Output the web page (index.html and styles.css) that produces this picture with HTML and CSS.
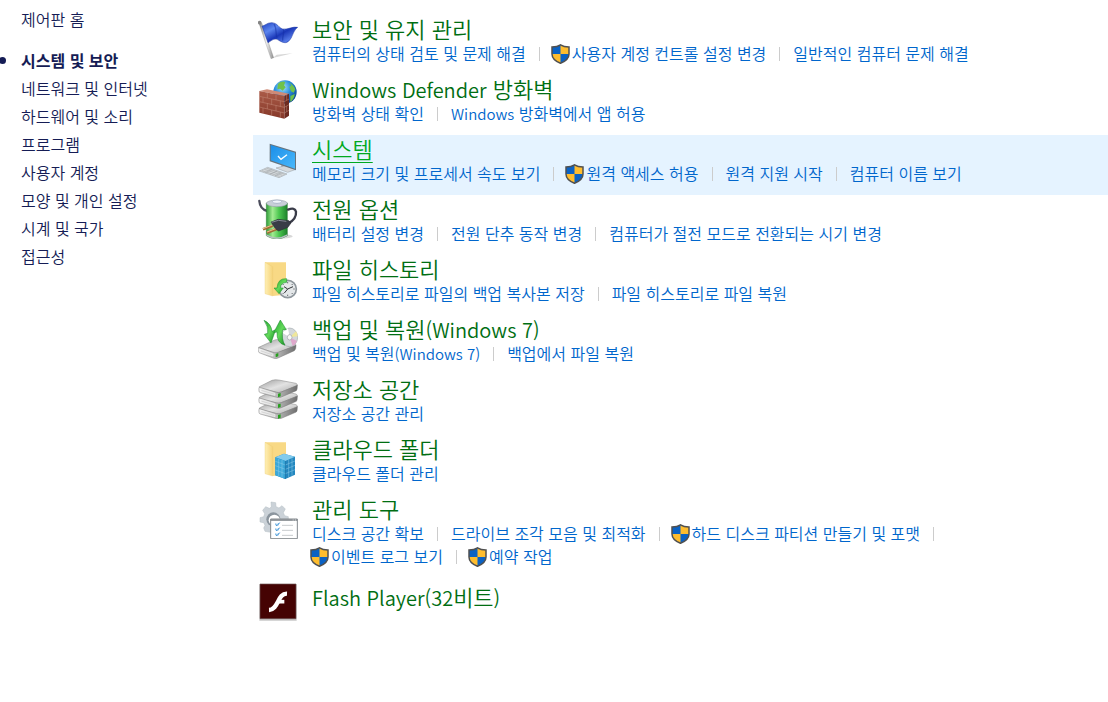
FILE: index.html
```html
<!DOCTYPE html>
<html lang="ko">
<head>
    <meta charset="UTF-8">
    <meta name="viewport" content="width=device-width, initial-scale=1.0">
    <title>시스템 및 보안</title>
    <link rel="stylesheet" href="styles.css">
</head>
<body>
    <!-- Shared shapes -->
    <svg class="defs" aria-hidden="true">
        <defs>
            <symbol id="shield" viewBox="0 0 19 20">
                <path d="M9.500 .8C7 2.500 4 3 1 3v7c0 4 4 7.500 8.500 9.300C14 17.500 18 14 18 10V3c-3 0-6-.5-8.500-2.200z" fill="#ffbd2e"/>
                <path d="M9.500.8C7 2.500 4 3 1 3v7h8.500zM9.500 10H18c0 4-4 7.500-8.500 9.300z" fill="#0b62c4"/>
                <path d="M9.500 .8C7 2.500 4 3 1 3v7c0 4 4 7.500 8.500 9.300C14 17.500 18 14 18 10V3c-3 0-6-.5-8.500-2.200z" fill="none" stroke="#505050" stroke-width="1.500"/>
            </symbol>
            <linearGradient id="flagBlue" x1="0" y1="0" x2="1" y2="1">
                <stop offset="0" stop-color="#1d3fc0"/>
                <stop offset=".3" stop-color="#5b85ee"/>
                <stop offset=".55" stop-color="#1a37b8"/>
                <stop offset=".8" stop-color="#5479e6"/>
                <stop offset="1" stop-color="#2444bd"/>
            </linearGradient>
            <linearGradient id="steel" x1="0" y1="0" x2="1" y2="0">
                <stop offset="0" stop-color="#7d7d7d"/>
                <stop offset=".5" stop-color="#f0f0f0"/>
                <stop offset="1" stop-color="#8d8d8d"/>
            </linearGradient>
            <radialGradient id="globe" cx=".4" cy=".3" r=".7">
                <stop offset="0" stop-color="#a8e4fb"/>
                <stop offset=".5" stop-color="#2a8fdc"/>
                <stop offset="1" stop-color="#0c4796"/>
            </radialGradient>
            <linearGradient id="brick" x1="0" y1="0" x2="0" y2="1">
                <stop offset="0" stop-color="#ab5b48"/>
                <stop offset="1" stop-color="#853829"/>
            </linearGradient>
            <linearGradient id="screen" x1="0" y1="0" x2="1" y2="1">
                <stop offset="0" stop-color="#1b8ee8"/>
                <stop offset="1" stop-color="#49b8fb"/>
            </linearGradient>
            <linearGradient id="cell" x1="0" y1="0" x2="1" y2="0">
                <stop offset="0" stop-color="#2f9f38"/>
                <stop offset=".3" stop-color="#a2eb92"/>
                <stop offset=".6" stop-color="#4cc750"/>
                <stop offset="1" stop-color="#1d822b"/>
            </linearGradient>
            <linearGradient id="folderFront" x1="0" y1="0" x2="1" y2="0">
                <stop offset="0" stop-color="#fff0b5"/>
                <stop offset="1" stop-color="#f5d37a"/>
            </linearGradient>
            <linearGradient id="arrowGreen" x1="0" y1="0" x2="1" y2="1">
                <stop offset="0" stop-color="#1ea32a"/>
                <stop offset=".5" stop-color="#63d95b"/>
                <stop offset="1" stop-color="#128a22"/>
            </linearGradient>
            <linearGradient id="driveTop" x1="0" y1="0" x2="1" y2="1">
                <stop offset="0" stop-color="#9b9b9b"/>
                <stop offset=".5" stop-color="#e2e2e2"/>
                <stop offset="1" stop-color="#adadad"/>
            </linearGradient>
            <linearGradient id="driveSide" x1="0" y1="0" x2="1" y2="0">
                <stop offset="0" stop-color="#f4f4f4"/>
                <stop offset=".5" stop-color="#b5b5b5"/>
                <stop offset="1" stop-color="#6e6e6e"/>
            </linearGradient>
            <g id="folder">
                <path d="M45 37h63v97l-40 4z" fill="#f8d985"/>
                <path d="M45 37l23 13v88l-23-7z" fill="url(#folderFront)" stroke="#ebc86c" stroke-width="1"/>
            </g>
            <g id="drive">
                <path d="M28 50L66 31Q74 28 86 30L138 40Q143 42 142 47L94 66Q86 69 80 67L31 55Q27 53 28 50z" fill="url(#driveTop)" stroke="#858585" stroke-width="1.500"/>
                <path d="M28 52Q26 54 27 63Q27 67 31 68L80 82Q88 84 94 81L139 62Q142 60 142 46L94 66Q86 69 80 67z" fill="url(#driveSide)" stroke="#777" stroke-width="1.500"/>
                <path d="M33 58l42 12v6l-42-12z" fill="#d4d4d4" stroke="#fff" stroke-width="1.500"/>
                <path d="M84 71l8-2v10l-8 3z" fill="#27a01f"/>
            </g>
        </defs>
    </svg>

    <div class="control-panel">
        <nav class="sidebar">
            <a class="home" href="#">제어판 홈</a>
            <ul>
                <li class="current"><a href="#">시스템 및 보안</a></li>
                <li><a href="#">네트워크 및 인터넷</a></li>
                <li><a href="#">하드웨어 및 소리</a></li>
                <li><a href="#">프로그램</a></li>
                <li><a href="#">사용자 계정</a></li>
                <li><a href="#">모양 및 개인 설정</a></li>
                <li><a href="#">시계 및 국가</a></li>
                <li><a href="#">접근성</a></li>
            </ul>
        </nav>

        <main class="categories">
            <section class="category">
                <svg class="icon" viewBox="24 27 120 120" aria-hidden="true">
                    <path d="M68 144l60-14-48 4z" fill="#d8d8d8"/>
                    <path d="M27 40l8-2 36 105-8 3z" fill="url(#steel)" stroke="#8a8a8a" stroke-width="1"/>
                    <circle cx="29" cy="38" r="5.500" fill="#858585"/>
                    <path d="M36 48C44 48 52 37 66 38C84 40 84 52 98 57C112 60 130 48 143 52C132 60 130 71 124 83C112 104 101 99 88 92C74 82 68 90 54 98z" fill="url(#flagBlue)" stroke="#1b349e" stroke-width="1.500"/>
                    <path d="M72 42c9 13 4 27 9 42M101 60c2 11-5 21-3 32" fill="none" stroke="#132ea3" stroke-width="4" opacity=".5"/>
                </svg>
                <div class="details">
                    <h2><a href="#">보안 및 유지 관리</a></h2>
                    <ul class="tasks">
                        <li><a href="#">컴퓨터의 상태 검토 및 문제 해결</a></li>
                        <li><svg class="shield" aria-hidden="true"><use href="#shield"/></svg><a href="#">사용자 계정 컨트롤 설정 변경</a></li>
                        <li><a href="#">일반적인 컴퓨터 문제 해결</a></li>
                    </ul>
                </div>
            </section>

            <section class="category">
                <svg class="icon" viewBox="24 207 120 120" aria-hidden="true">
                    <circle cx="105" cy="246" r="35" fill="url(#globe)"/>
                    <path d="M84 222c8-8 17-9 22-5l-4 9 5 6-9 10-8-6-8 2zM116 218c10 3 16 10 20 20l-5 10-8-4-5-13 6-5zM121 258l13-6c0 11-6 18-13 24z" fill="#6fc24a"/>
                    <path d="M28 243l23-5 66 13-14 7z" fill="#cf8a76"/>
                    <path d="M103 258l14-7v66l-14 9z" fill="#6d2a20"/>
                    <path d="M28 243l75 15v68l-75-18z" fill="url(#brick)"/>
                    <path d="M28 259l75 16 14-8M28 275l75 17 14-8M28 291l75 18 14-8M52 248v16M78 254v16M39 262v15M65 267v17M91 272v18M52 280v17M78 286v17M39 294v16M65 300v17M91 306v17M110 254v17M110 288v17" fill="none" stroke="#c48b78" stroke-width="1.500"/>
                </svg>
                <div class="details">
                    <h2><a href="#"><span class="latin">Windows Defender</span> 방화벽</a></h2>
                    <ul class="tasks">
                        <li><a href="#">방화벽 상태 확인</a></li>
                        <li><a href="#"><span class="latin">Windows</span> 방화벽에서 앱 허용</a></li>
                    </ul>
                </div>
            </section>

            <section class="category selected">
                <svg class="icon" viewBox="24 27 120 120" aria-hidden="true">
                    <path d="M94 100l17 5v12l-17-4z" fill="#a4abb0"/>
                    <path d="M78 114l27-7 33 11-25 9z" fill="#d5d9dc" stroke="#92999e" stroke-width="1.500"/>
                    <path d="M59 41l79 24v56L59 94z" fill="#66737d"/>
                    <path d="M62 45l73 23v48L62 91z" fill="url(#screen)"/>
                    <path d="M84 78l9 10 18-14" fill="none" stroke="#fff" stroke-width="4"/>
                    <path d="M28 123l25-11 58 20-24 11z" fill="#d6dadd" stroke="#949b9f" stroke-width="1.500"/>
                    <path d="M36 122l53 17M43 118l54 18M50 115l54 18M46 128l21-10M60 133l21-10M75 137l19-9" stroke="#969da1" stroke-width="1.500"/>
                </svg>
                <div class="details">
                    <h2><a href="#">시스템</a></h2>
                    <ul class="tasks">
                        <li><a href="#">메모리 크기 및 프로세서 속도 보기</a></li>
                        <li><svg class="shield" aria-hidden="true"><use href="#shield"/></svg><a href="#">원격 액세스 허용</a></li>
                        <li><a href="#">원격 지원 시작</a></li>
                        <li><a href="#">컴퓨터 이름 보기</a></li>
                    </ul>
                </div>
            </section>

            <section class="category">
                <svg class="icon" viewBox="24 207 120 120" aria-hidden="true">
                    <ellipse cx="90" cy="319" rx="38" ry="7" fill="#d8d8d8"/>
                    <path d="M28 213q2 25 24 30" fill="none" stroke="#4b4d5c" stroke-width="7" stroke-linecap="round"/>
                    <path d="M49 219v98q31 20 63 0v-98z" fill="url(#cell)" stroke="#28772f" stroke-width="1.500"/>
                    <ellipse cx="80.500" cy="220" rx="31.500" ry="10" fill="#c8cfd8" stroke="#8d97a2" stroke-width="1.500"/>
                    <ellipse cx="81" cy="215" rx="14" ry="5" fill="#f0f4fb" stroke="#8293ae" stroke-width="1.500"/>
                    <path d="M49 313q31 19 63 0v4q-31 20-63 0z" fill="#b7bdc4"/>
                    <path d="M114 239q21-8 24 6q2 21-22 35" fill="none" stroke="#3a3c49" stroke-width="7" stroke-linecap="round"/>
                    <path d="M68 287l-29 11M80 297l-29 11" stroke="#a06d34" stroke-width="8"/>
                    <path d="M67 285l-28 11M79 295l-28 11" stroke="#e9c28d" stroke-width="3"/>
                    <path d="M63 276l21-8 33 4 6 7-9 13-28 11q-9-3-23-27z" fill="#393c47" stroke="#20222b" stroke-width="1.500"/>
                    <path d="M65 277l20-6 24 3" fill="none" stroke="#858897" stroke-width="3"/>
                </svg>
                <div class="details">
                    <h2><a href="#">전원 옵션</a></h2>
                    <ul class="tasks">
                        <li><a href="#">배터리 설정 변경</a></li>
                        <li><a href="#">전원 단추 동작 변경</a></li>
                        <li><a href="#">컴퓨터가 절전 모드로 전환되는 시기 변경</a></li>
                    </ul>
                </div>
            </section>

            <section class="category">
                <svg class="icon" viewBox="24 27 120 120" aria-hidden="true">
                    <use href="#folder"/>
                    <circle cx="113" cy="117" r="26" fill="#e4e7e9" stroke="#8f979d" stroke-width="5"/>
                    <path d="M113 96v4M113 134v4M92 117h4M130 117h4M98 102l3 3M125 129l3 3M98 132l3-3M125 105l3-3" stroke="#4d5357" stroke-width="2.500"/>
                    <path d="M102 110l11 7 16-7M113 117l-10 12" fill="none" stroke="#303437" stroke-width="3"/>
                    <path d="M110 86q-27-2-29 28h-9l15 17 13-17h-8q-2-15 18-17z" fill="url(#arrowGreen)" stroke="#159126" stroke-width="1.500"/>
                </svg>
                <div class="details">
                    <h2><a href="#">파일 히스토리</a></h2>
                    <ul class="tasks">
                        <li><a href="#">파일 히스토리로 파일의 백업 복사본 저장</a></li>
                        <li><a href="#">파일 히스토리로 파일 복원</a></li>
                    </ul>
                </div>
            </section>

            <section class="category">
                <svg class="icon" viewBox="24 207 120 120" aria-hidden="true">
                    <path d="M26 292l48-22q5-2 11-1l49 11q5 2 3 8l-54 21q-4 2-9 1z" fill="url(#driveTop)" stroke="#888" stroke-width="1.500"/>
                    <path d="M25 293q-1 4 0 11 1 4 5 5l42 16q6 2 12-1l49-22q5-3 5-16l-54 21q-5 2-11 1z" fill="url(#driveSide)" stroke="#777" stroke-width="1.500"/>
                    <path d="M31 299l38 13v6l-38-13z" fill="#d5d5d5" stroke="#fff" stroke-width="1.500"/>
                    <path d="M77 312l8-3v10l-8 3z" fill="#27a01f"/>
                    <ellipse cx="119" cy="262" rx="24" ry="28" fill="#d3d8db" stroke="#8f969a" stroke-width="1.500"/>
                    <path d="M119 262l-21-13q6-12 16-14z" fill="#fff"/>
                    <path d="M119 262l22 11q-5 12-13 15z" fill="#dfa8cc"/>
                    <path d="M119 262l24-3q-1-10-5-15z" fill="#efe79b"/>
                    <ellipse cx="119" cy="262" rx="7" ry="8" fill="#f8f8f8" stroke="#9ca2a6" stroke-width="2"/>
                    <path d="M42 211q21 9 24 33l11-5-14 40-20-26 10-3q3-19-11-39z" fill="url(#arrowGreen)" stroke="#16852a" stroke-width="1.500"/>
                    <path d="M105 286q-26-7-24-40l-10 2 20-38 18 29-11 1q-4 28 7 46z" fill="url(#arrowGreen)" stroke="#16852a" stroke-width="1.500"/>
                </svg>
                <div class="details">
                    <h2><a href="#">백업 및 복원<span class="latin">(Windows 7)</span></a></h2>
                    <ul class="tasks">
                        <li><a href="#">백업 및 복원<span class="latin">(Windows 7)</span></a></li>
                        <li><a href="#">백업에서 파일 복원</a></li>
                    </ul>
                </div>
            </section>

            <section class="category">
                <svg class="icon" viewBox="24 27 120 120" aria-hidden="true">
                    <use href="#drive" y="64"/>
                    <use href="#drive" y="32"/>
                    <use href="#drive"/>
                </svg>
                <div class="details">
                    <h2><a href="#">저장소 공간</a></h2>
                    <ul class="tasks">
                        <li><a href="#">저장소 공간 관리</a></li>
                    </ul>
                </div>
            </section>

            <section class="category">
                <svg class="icon" viewBox="24 27 120 120" aria-hidden="true">
                    <use href="#folder"/>
                    <path d="M76 82l26-11 33 9v54l-29 13-30-11z" fill="#2387bf"/>
                    <path d="M76 82l26-11 33 9-29 13z" fill="#82cbed"/>
                    <path d="M76 82l30 11v54l-30-11z" fill="#3ba8d9"/>
                    <path d="M76 94l30 11 29-12M76 107l30 11 29-12M76 120l30 11 29-12M86 86v53M96 90v53M116 89v52M126 85v52" fill="none" stroke="#8fcdea" stroke-width="1.500"/>
                    <path d="M106 93v54" stroke="#176b9e" stroke-width="2"/>
                </svg>
                <div class="details">
                    <h2><a href="#">클라우드 폴더</a></h2>
                    <ul class="tasks">
                        <li><a href="#">클라우드 폴더 관리</a></li>
                    </ul>
                </div>
            </section>

            <section class="category">
                <svg class="icon" viewBox="24 12 120 120" aria-hidden="true">
                    <path d="M63 21l14 2 1 12 9 4 9-7 10 10-6 11 4 9 11 3v15l-11 3-4 9-9 25-46-8-4-10 4-8-4-8-11-2V68l11-3 3-9-6-10 9-11 11 5 6-4z" fill="#cbd2d8" stroke="#b3bcc3" stroke-width="1.500"/>
                    <circle cx="70" cy="73" r="21" fill="#8b959e"/>
                    <circle cx="73" cy="76" r="17" fill="#fff"/>
                    <path d="M62 72h80v59H62z" fill="#fff" stroke="#83898d" stroke-width="3"/>
                    <path d="M62 75h80" stroke="#83898d" stroke-width="5"/>
                    <path d="M128 75h3M135 75h3" stroke="#fff" stroke-width="2"/>
                    <path d="M76 84h11v9H76zM76 99h11v9H76zM76 114h11v9H76z" fill="#dceefb"/>
                    <path d="M76 87l5 5 8-9M76 102l5 5 8-9M76 117l5 5 8-9" fill="none" stroke="#2384cf" stroke-width="3"/>
                    <path d="M96 91h33M96 106h33M96 121h33" stroke="#bdc1c4" stroke-width="2.500"/>
                </svg>
                <div class="details">
                    <h2><a href="#">관리 도구</a></h2>
                    <ul class="tasks">
                        <li><a href="#">디스크 공간 확보</a></li>
                        <li><a href="#">드라이브 조각 모음 및 최적화</a></li>
                        <li><svg class="shield" aria-hidden="true"><use href="#shield"/></svg><a href="#">하드 디스크 파티션 만들기 및 포맷</a></li>
                        <li><svg class="shield" aria-hidden="true"><use href="#shield"/></svg><a href="#">이벤트 로그 보기</a></li>
                        <li><svg class="shield" aria-hidden="true"><use href="#shield"/></svg><a href="#">예약 작업</a></li>
                    </ul>
                </div>
            </section>

            <section class="category single">
                <svg class="icon" viewBox="24 261 120 120" aria-hidden="true">
                    <path d="M28 268h112v109H28z" fill="#c9c9c9"/>
                    <path d="M30 267h108v104H30z" fill="#450303" stroke="#6d5555" stroke-width="2"/>
                    <path d="M111 296c-29-1-25 48-54 49" fill="none" stroke="#fff" stroke-width="13"/>
                    <path d="M84 320h19" stroke="#fff" stroke-width="11"/>
                </svg>
                <div class="details">
                    <h2><a href="#"><span class="latin">Flash Player(32</span>비트<span class="latin">)</span></a></h2>
                </div>
            </section>
        </main>
    </div>
</body>
</html>
```
FILE: styles.css
```css
* {
    box-sizing: border-box;
}

body {
    margin: 0;
    background: #ffffff;
    font-family: "Noto Sans CJK KR", sans-serif;
    font-size: 16px;
    font-weight: 350;
}

a {
    color: inherit;
    text-decoration: none;
}

ul {
    list-style: none;
    margin: 0;
    padding: 0;
}

.defs {
    position: absolute;
    width: 0;
    height: 0;
}

.control-panel {
    display: flex;
    min-height: 100vh;
}

/* Left navigation */
.sidebar {
    flex: 0 0 253px;
    padding-top: 5px;
    color: #151c55;
    line-height: 28px;
}

.sidebar a {
    display: block;
    padding-left: 21px;
}

.sidebar .home {
    margin-bottom: 13px;
}

.sidebar .current {
    position: relative;
    font-weight: bold;
}

.sidebar .current::before {
    content: "";
    position: absolute;
    left: -1px;
    top: 11px;
    width: 7px;
    height: 7px;
    border-radius: 50%;
    background: #151c55;
}

/* Category list */
.categories {
    flex: 1;
    min-width: 0;
    padding-top: 15px;
}

.category {
    display: flex;
    gap: 14px;
    padding: 0 40px 10px 5px;
}

.category.selected {
    background: #e5f3ff;
}

.icon {
    flex: none;
    width: 40px;
    height: 40px;
    margin-top: 4px;
}

.details {
    flex: 1;
    min-width: 0;
}

h2 {
    margin: 0;
    color: #006e12;
    font-size: 22px;
    font-weight: inherit;
    line-height: 27px;
}

.latin {
    line-height: 1;
}

h2 .latin {
    font-size: 20px;
}

.selected h2 a {
    color: #00a81f;
    text-decoration: underline;
    text-decoration-thickness: 1px;
    text-underline-offset: 4px;
}

.single h2 {
    padding-top: 5px;
}

.tasks {
    display: flex;
    flex-wrap: wrap;
    color: #0066cc;
    line-height: 23px;
}

.tasks .latin {
    font-size: 15px;
}

.tasks li {
    display: flex;
    align-items: center;
}

.tasks li:not(:last-child)::after {
    content: "";
    width: 1px;
    height: 14px;
    margin: 0 13px;
    background: #cccccc;
}

.shield {
    width: 19px;
    height: 20px;
    margin: 0 2px 0 -2px;
}
```
